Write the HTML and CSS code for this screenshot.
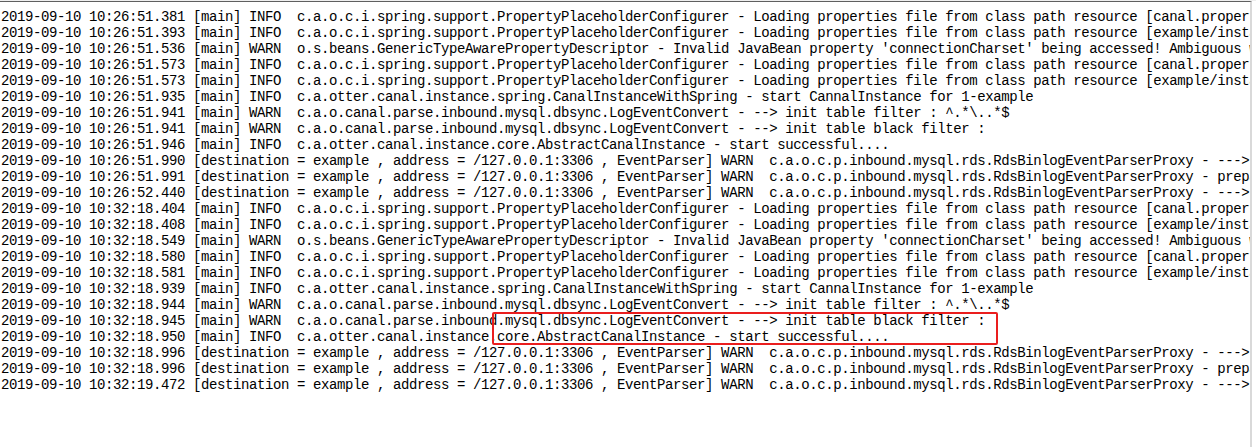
FILE: index.html
```html
<!DOCTYPE html>
<html lang="en">
<head>
<meta charset="utf-8">
<title>canal log</title>
<link rel="stylesheet" href="styles.css">
</head>
<body>
<div class="window">
  <div class="console">
    <div class="log">
<div class="line">2019-09-10 10:26:51.381 [main] INFO  c.a.o.c.i.spring.support.PropertyPlaceholderConfigurer - Loading properties file from class path resource [canal.properties]</div>
<div class="line">2019-09-10 10:26:51.393 [main] INFO  c.a.o.c.i.spring.support.PropertyPlaceholderConfigurer - Loading properties file from class path resource [example/instance.properties]</div>
<div class="line">2019-09-10 10:26:51.536 [main] WARN  o.s.beans.GenericTypeAwarePropertyDescriptor - Invalid JavaBean property 'connectionCharset' being accessed! Ambiguous write methods found next to actually used [public void com.alibaba.otter.canal.parse.inbound.mysql.AbstractMysqlEventParser.setConnectionCharset(java.lang.String)]</div>
<div class="line">2019-09-10 10:26:51.573 [main] INFO  c.a.o.c.i.spring.support.PropertyPlaceholderConfigurer - Loading properties file from class path resource [canal.properties]</div>
<div class="line">2019-09-10 10:26:51.573 [main] INFO  c.a.o.c.i.spring.support.PropertyPlaceholderConfigurer - Loading properties file from class path resource [example/instance.properties]</div>
<div class="line">2019-09-10 10:26:51.935 [main] INFO  c.a.otter.canal.instance.spring.CanalInstanceWithSpring - start CannalInstance for 1-example</div>
<div class="line">2019-09-10 10:26:51.941 [main] WARN  c.a.o.canal.parse.inbound.mysql.dbsync.LogEventConvert - --&gt; init table filter : ^.*\..*$</div>
<div class="line">2019-09-10 10:26:51.941 [main] WARN  c.a.o.canal.parse.inbound.mysql.dbsync.LogEventConvert - --&gt; init table black filter :</div>
<div class="line">2019-09-10 10:26:51.946 [main] INFO  c.a.otter.canal.instance.core.AbstractCanalInstance - start successful....</div>
<div class="line">2019-09-10 10:26:51.990 [destination = example , address = /127.0.0.1:3306 , EventParser] WARN  c.a.o.c.p.inbound.mysql.rds.RdsBinlogEventParserProxy - ---&gt; begin to find start position, it will be long time for reset or first position</div>
<div class="line">2019-09-10 10:26:51.991 [destination = example , address = /127.0.0.1:3306 , EventParser] WARN  c.a.o.c.p.inbound.mysql.rds.RdsBinlogEventParserProxy - prepare to find start position just show master status</div>
<div class="line">2019-09-10 10:26:52.440 [destination = example , address = /127.0.0.1:3306 , EventParser] WARN  c.a.o.c.p.inbound.mysql.rds.RdsBinlogEventParserProxy - ---&gt; find start position successfully, EntryPosition[included=false,journalName=mysql-bin.000001,position=4,serverId=1,gtid=&lt;null&gt;,timestamp=1568081731000] cost : 444ms , the next step is binlog dump</div>
<div class="line">2019-09-10 10:32:18.404 [main] INFO  c.a.o.c.i.spring.support.PropertyPlaceholderConfigurer - Loading properties file from class path resource [canal.properties]</div>
<div class="line">2019-09-10 10:32:18.408 [main] INFO  c.a.o.c.i.spring.support.PropertyPlaceholderConfigurer - Loading properties file from class path resource [example/instance.properties]</div>
<div class="line">2019-09-10 10:32:18.549 [main] WARN  o.s.beans.GenericTypeAwarePropertyDescriptor - Invalid JavaBean property 'connectionCharset' being accessed! Ambiguous write methods found next to actually used [public void com.alibaba.otter.canal.parse.inbound.mysql.AbstractMysqlEventParser.setConnectionCharset(java.lang.String)]</div>
<div class="line">2019-09-10 10:32:18.580 [main] INFO  c.a.o.c.i.spring.support.PropertyPlaceholderConfigurer - Loading properties file from class path resource [canal.properties]</div>
<div class="line">2019-09-10 10:32:18.581 [main] INFO  c.a.o.c.i.spring.support.PropertyPlaceholderConfigurer - Loading properties file from class path resource [example/instance.properties]</div>
<div class="line">2019-09-10 10:32:18.939 [main] INFO  c.a.otter.canal.instance.spring.CanalInstanceWithSpring - start CannalInstance for 1-example</div>
<div class="line">2019-09-10 10:32:18.944 [main] WARN  c.a.o.canal.parse.inbound.mysql.dbsync.LogEventConvert - --&gt; init table filter : ^.*\..*$</div>
<div class="line">2019-09-10 10:32:18.945 [main] WARN  c.a.o.canal.parse.inbound.mysql.dbsync.LogEventConvert - --&gt; init table black filter :</div>
<div class="line">2019-09-10 10:32:18.950 [main] INFO  c.a.otter.canal.instance.core.AbstractCanalInstance - start successful....</div>
<div class="line">2019-09-10 10:32:18.996 [destination = example , address = /127.0.0.1:3306 , EventParser] WARN  c.a.o.c.p.inbound.mysql.rds.RdsBinlogEventParserProxy - ---&gt; begin to find start position, it will be long time for reset or first position</div>
<div class="line">2019-09-10 10:32:18.996 [destination = example , address = /127.0.0.1:3306 , EventParser] WARN  c.a.o.c.p.inbound.mysql.rds.RdsBinlogEventParserProxy - prepare to find start position just show master status</div>
<div class="line">2019-09-10 10:32:19.472 [destination = example , address = /127.0.0.1:3306 , EventParser] WARN  c.a.o.c.p.inbound.mysql.rds.RdsBinlogEventParserProxy - ---&gt; find start position successfully, EntryPosition[included=false,journalName=mysql-bin.000001,position=4,serverId=1,gtid=&lt;null&gt;,timestamp=1568082138000] cost : 476ms , the next step is binlog dump</div>
      <div class="highlight"></div>
    </div>
  </div>
</div>
</body>
</html>
```

FILE: styles.css
```css
html, body {
  margin: 0;
  padding: 0;
  background: #ffffff;
}

.window {
  width: 1256px;
  height: 447px;
  box-sizing: border-box;
  border-top: 1px solid #efefef;
  display: flex;
  overflow: hidden;
}

.console {
  width: 1252px;
  flex: none;
  height: 100%;
  box-sizing: border-box;
  border-top: 1px solid #5f5f5f;
  border-right: 2px solid #d9d9d9;
  overflow: hidden;
  background: #ffffff;
}

.log {
  position: relative;
  padding: 7px 0 0 1px;
  font-family: "Liberation Mono", "DejaVu Sans Mono", monospace;
  font-size: 14px;
  letter-spacing: -0.4px;
  line-height: 16px;
  color: #000000;
}

.line {
  white-space: pre;
  height: 16px;
}

.highlight {
  position: absolute;
  left: 492px;
  top: 310px;
  width: 506px;
  height: 33px;
  box-sizing: border-box;
  border: 2px solid #ea1e1e;
  border-radius: 2px;
}
```
